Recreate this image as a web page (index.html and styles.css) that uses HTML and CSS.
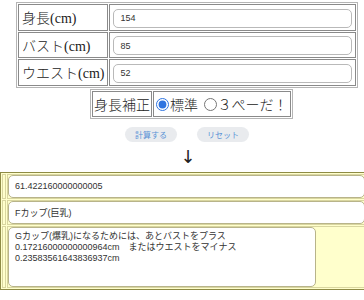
FILE: index.html
```html
<!DOCTYPE html>
<html lang="ja">
<head>
    <meta charset="UTF-8">
    <meta name="viewport" content="width=device-width, initial-scale=1.0">
    <title>カップ計算</title>
    <link rel="stylesheet" href="styles.css">
</head>
<body>
    <table class="form-table">
        <tr>
            <td class="label">身長(cm)</td>
            <td><input type="text" class="field" value="154"></td>
        </tr>
        <tr>
            <td class="label">バスト(cm)</td>
            <td><input type="text" class="field" value="85"></td>
        </tr>
        <tr>
            <td class="label">ウエスト(cm)</td>
            <td><input type="text" class="field" value="52"></td>
        </tr>
    </table>

    <table class="mode-table">
        <tr>
            <td class="label">身長補正</td>
            <td class="radios">
                <label><input type="radio" name="mode" checked>標準</label>
                <label><input type="radio" name="mode">３ぺーだ！</label>
            </td>
        </tr>
    </table>

    <div class="buttons">
        <button class="btn">計算する</button>
        <button class="btn">リセット</button>
    </div>

    <div class="arrow">↓</div>

    <table class="result-table">
        <tr>
            <td class="edge"></td>
            <td><input type="text" class="out" value="61.422160000000005"></td>
        </tr>
        <tr>
            <td class="edge"></td>
            <td><input type="text" class="out" value="Fカップ(巨乳)"></td>
        </tr>
        <tr>
            <td class="edge"></td>
            <td><textarea class="memo">Gカップ(爆乳)になるためには、あとバストをプラス
0.17216000000000964cm　またはウエストをマイナス
0.23583561643836937cm</textarea></td>
        </tr>
    </table>
</body>
</html>
```

FILE: styles.css
```css
body {
    margin: 0;
    font-family: "Liberation Serif", "Noto Sans CJK JP", serif;
    color: #222;
    background-color: #fff;
    overflow: hidden;
}

/* Input table */
.form-table {
    margin: 2px 0 0 16px;
    width: 342px;
    border: 1px solid #b5b5b5;
    border-spacing: 1px;
}

.form-table td {
    border: 1px solid #8a8a8a;
    padding: 2px 3px;
    height: 20px;
}

.form-table .label {
    width: 76px;
    font-size: 14px;
    font-weight: 300;
    white-space: nowrap;
}

.field {
    box-sizing: border-box;
    width: 100%;
    height: 19px;
    padding: 0 6px;
    border: 1px solid #b9b9b9;
    border-radius: 5px;
    font-family: "Liberation Sans", "Noto Sans CJK JP", sans-serif;
    font-size: 9px;
    color: #333;
}

/* Mode radios */
.mode-table {
    margin: 1px 0 0 90px;
    border: 1px solid #b5b5b5;
    border-spacing: 1px;
}

.mode-table td {
    border: 1px solid #8a8a8a;
    padding: 2px 1px;
    font-size: 14px;
    font-weight: 300;
    white-space: nowrap;
}

.radios label {
    margin-right: 1px;
}

.radios input {
    margin: 0 1px 0 1px;
    width: 13px;
    height: 13px;
    vertical-align: -1px;
    accent-color: #2f74e0;
}

/* Buttons */
.buttons {
    display: flex;
    justify-content: center;
    gap: 20px;
    margin-top: 8px;
    padding-left: 10px;
}

.btn {
    border: none;
    border-radius: 8px;
    background-color: #e9ebee;
    color: #5b93d6;
    font-family: "Noto Sans CJK JP", sans-serif;
    font-size: 8px;
    padding: 2px 10px;
    line-height: 11px;
}

.arrow {
    text-align: center;
    font-size: 18px;
    line-height: 22px;
    margin-top: 4px;
    padding-left: 12px;
    font-family: "DejaVu Sans", sans-serif;
    color: #222;
}

/* Results */
.result-table {
    margin-top: 4px;
    width: 368px;
    border: 1px solid #8e8b45;
    border-spacing: 1px;
    background-color: #ffffcc;
}

.result-table td {
    border: 1px solid #d9d6a0;
    padding: 0;
}

.result-table .edge {
    width: 2px;
}

.out {
    box-sizing: border-box;
    display: block;
    width: 100%;
    height: 23px;
    padding: 0 6px;
    border: 1px solid #b8b48a;
    border-radius: 5px;
    font-family: "Liberation Sans", "Noto Sans CJK JP", sans-serif;
    font-size: 9px;
    color: #333;
}

.memo {
    box-sizing: border-box;
    display: block;
    width: 308px;
    height: 60px;
    padding: 3px 6px;
    border: 1px solid #b8b48a;
    border-radius: 5px;
    resize: none;
    font-family: "Liberation Sans", "Noto Sans CJK JP", sans-serif;
    font-size: 9px;
    line-height: 11px;
    color: #333;
}
```
